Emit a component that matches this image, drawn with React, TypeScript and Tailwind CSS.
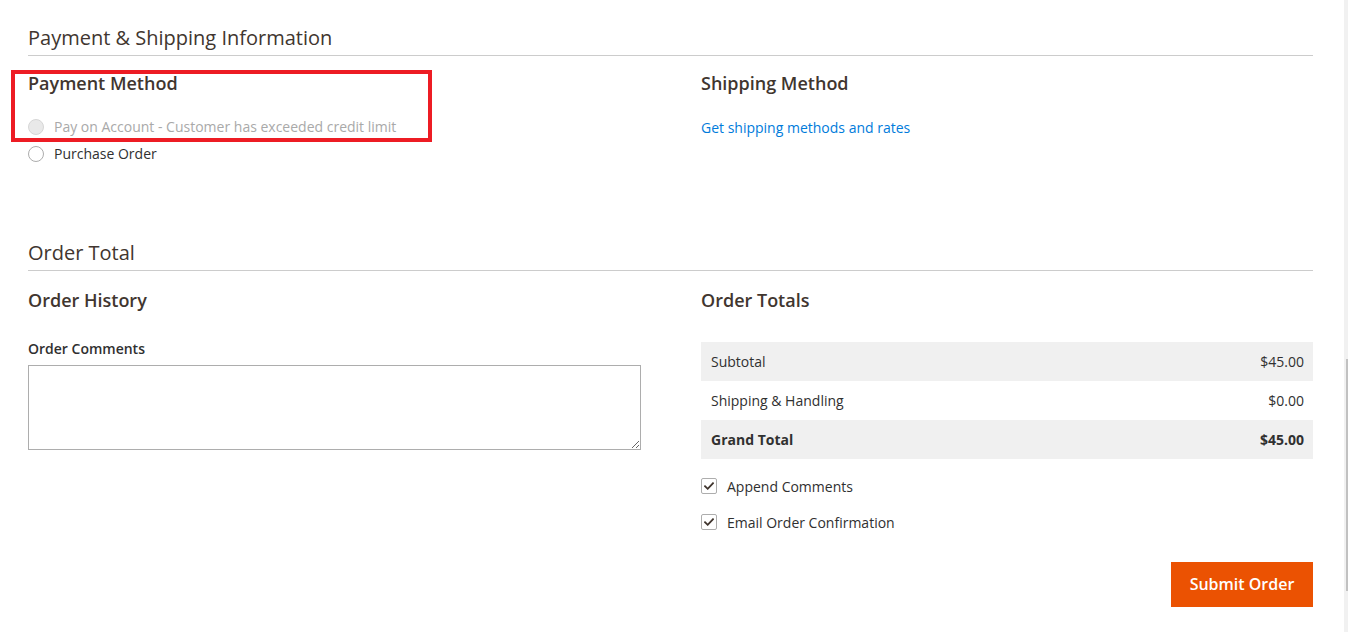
import React from "react";

function Radio({ disabled }: { disabled?: boolean }) {
  return (
    <span
      className={
        "inline-block w-[16px] h-[16px] rounded-full border shrink-0 " +
        (disabled ? "bg-[#e9e9e9] border-[#d6d6d6]" : "bg-white border-[#adadad]")
      }
    />
  );
}

function Checkbox() {
  return (
    <span className="inline-flex items-center justify-center w-[16px] h-[16px] border border-[#adadad] rounded-[2px] bg-white shrink-0">
      <svg width="10" height="8" viewBox="0 0 10 8" fill="none">
        <path d="M1 4.2 L3.7 6.8 L9 1.2" stroke="#41362f" strokeWidth="1.8" strokeLinecap="square" />
      </svg>
    </span>
  );
}

export default function App() {
  return (
    <div
      className="flex w-[1348px] h-[632px] overflow-hidden bg-white text-[#303030]"
      style={{ fontFamily: '"Open Sans", "Liberation Sans", sans-serif' }}
    >
      <div className="relative flex-1 pl-[28px] pr-[31px]">
        {/* annotation box */}
        <div className="absolute left-[11px] top-[70px] w-[421px] h-[72px] border-[4px] border-[#ed1c24] pointer-events-none" />

        {/* Section 1 */}
        <div className="pt-[24px]">
          <div className="text-[20px] leading-[27px] text-[#41362f] pb-[4px] border-b border-[#cccccc]">
            Payment &amp; Shipping Information
          </div>
          <div className="flex">
            <div className="w-[673px]">
              <div className="mt-[15px] text-[18px] leading-[24px] font-semibold text-[#41362f]">
                Payment Method
              </div>
              <div className="mt-[18px]">
                <div className="flex items-center gap-[10px] h-[27px] text-[14px]">
                  <Radio disabled />
                  <span className="text-[#a9a9a9]">Pay on Account - Customer has exceeded credit limit</span>
                </div>
                <div className="flex items-center gap-[10px] h-[27px] text-[14px]">
                  <Radio />
                  <span>Purchase Order</span>
                </div>
              </div>
            </div>
            <div className="flex-1">
              <div className="mt-[15px] text-[18px] leading-[24px] font-semibold text-[#41362f]">
                Shipping Method
              </div>
              <div className="mt-[19px] h-[27px] flex items-center text-[14px]">
                <a className="text-[#007bdb]" href="#">Get shipping methods and rates</a>
              </div>
            </div>
          </div>
        </div>

        {/* Section 2 */}
        <div className="mt-[72px]">
          <div className="text-[20px] leading-[27px] text-[#41362f] pb-[4px] border-b border-[#cccccc]">
            Order Total
          </div>
          <div className="flex">
            <div className="w-[673px]">
              <div className="mt-[17px] text-[18px] leading-[24px] font-semibold text-[#41362f]">
                Order History
              </div>
              <div className="mt-[27px] text-[14px] leading-[20px] font-semibold text-[#303030]">
                Order Comments
              </div>
              <textarea className="mt-[6px] block w-[613px] h-[85px] border border-[#adadad] bg-white resize-y outline-none" />
            </div>
            <div className="flex-1 flex flex-col">
              <div className="mt-[17px] text-[18px] leading-[24px] font-semibold text-[#41362f]">
                Order Totals
              </div>
              <div className="mt-[30px] text-[14px]">
                <div className="flex justify-between items-center h-[39px] px-[10px] pr-[9px] bg-[#f0f0f0]">
                  <span>Subtotal</span>
                  <span>$45.00</span>
                </div>
                <div className="flex justify-between items-center h-[39px] px-[10px] pr-[9px]">
                  <span>Shipping &amp; Handling</span>
                  <span>$0.00</span>
                </div>
                <div className="flex justify-between items-center h-[39px] px-[10px] pr-[9px] bg-[#f0f0f0] font-bold">
                  <span>Grand Total</span>
                  <span>$45.00</span>
                </div>
              </div>
              <div className="mt-[17px] flex items-center gap-[10px] h-[20px] text-[14px]">
                <Checkbox />
                <span>Append Comments</span>
              </div>
              <div className="mt-[16px] flex items-center gap-[10px] h-[20px] text-[14px]">
                <Checkbox />
                <span>Email Order Confirmation</span>
              </div>
              <div className="mt-[30px] flex justify-end">
                <button className="h-[45px] w-[142px] pb-[2px] bg-[#eb5202] text-white text-[16px] font-semibold">
                  Submit Order
                </button>
              </div>
            </div>
          </div>
        </div>
      </div>
      {/* scrollbar */}
      <div className="w-[4px] h-full bg-[#f1f1f1] flex flex-col">
        <div className="h-[359px]" />
        <div className="ml-[2px] w-[2px] h-[232px] bg-[#c1c1c1]" />
      </div>
    </div>
  );
}
